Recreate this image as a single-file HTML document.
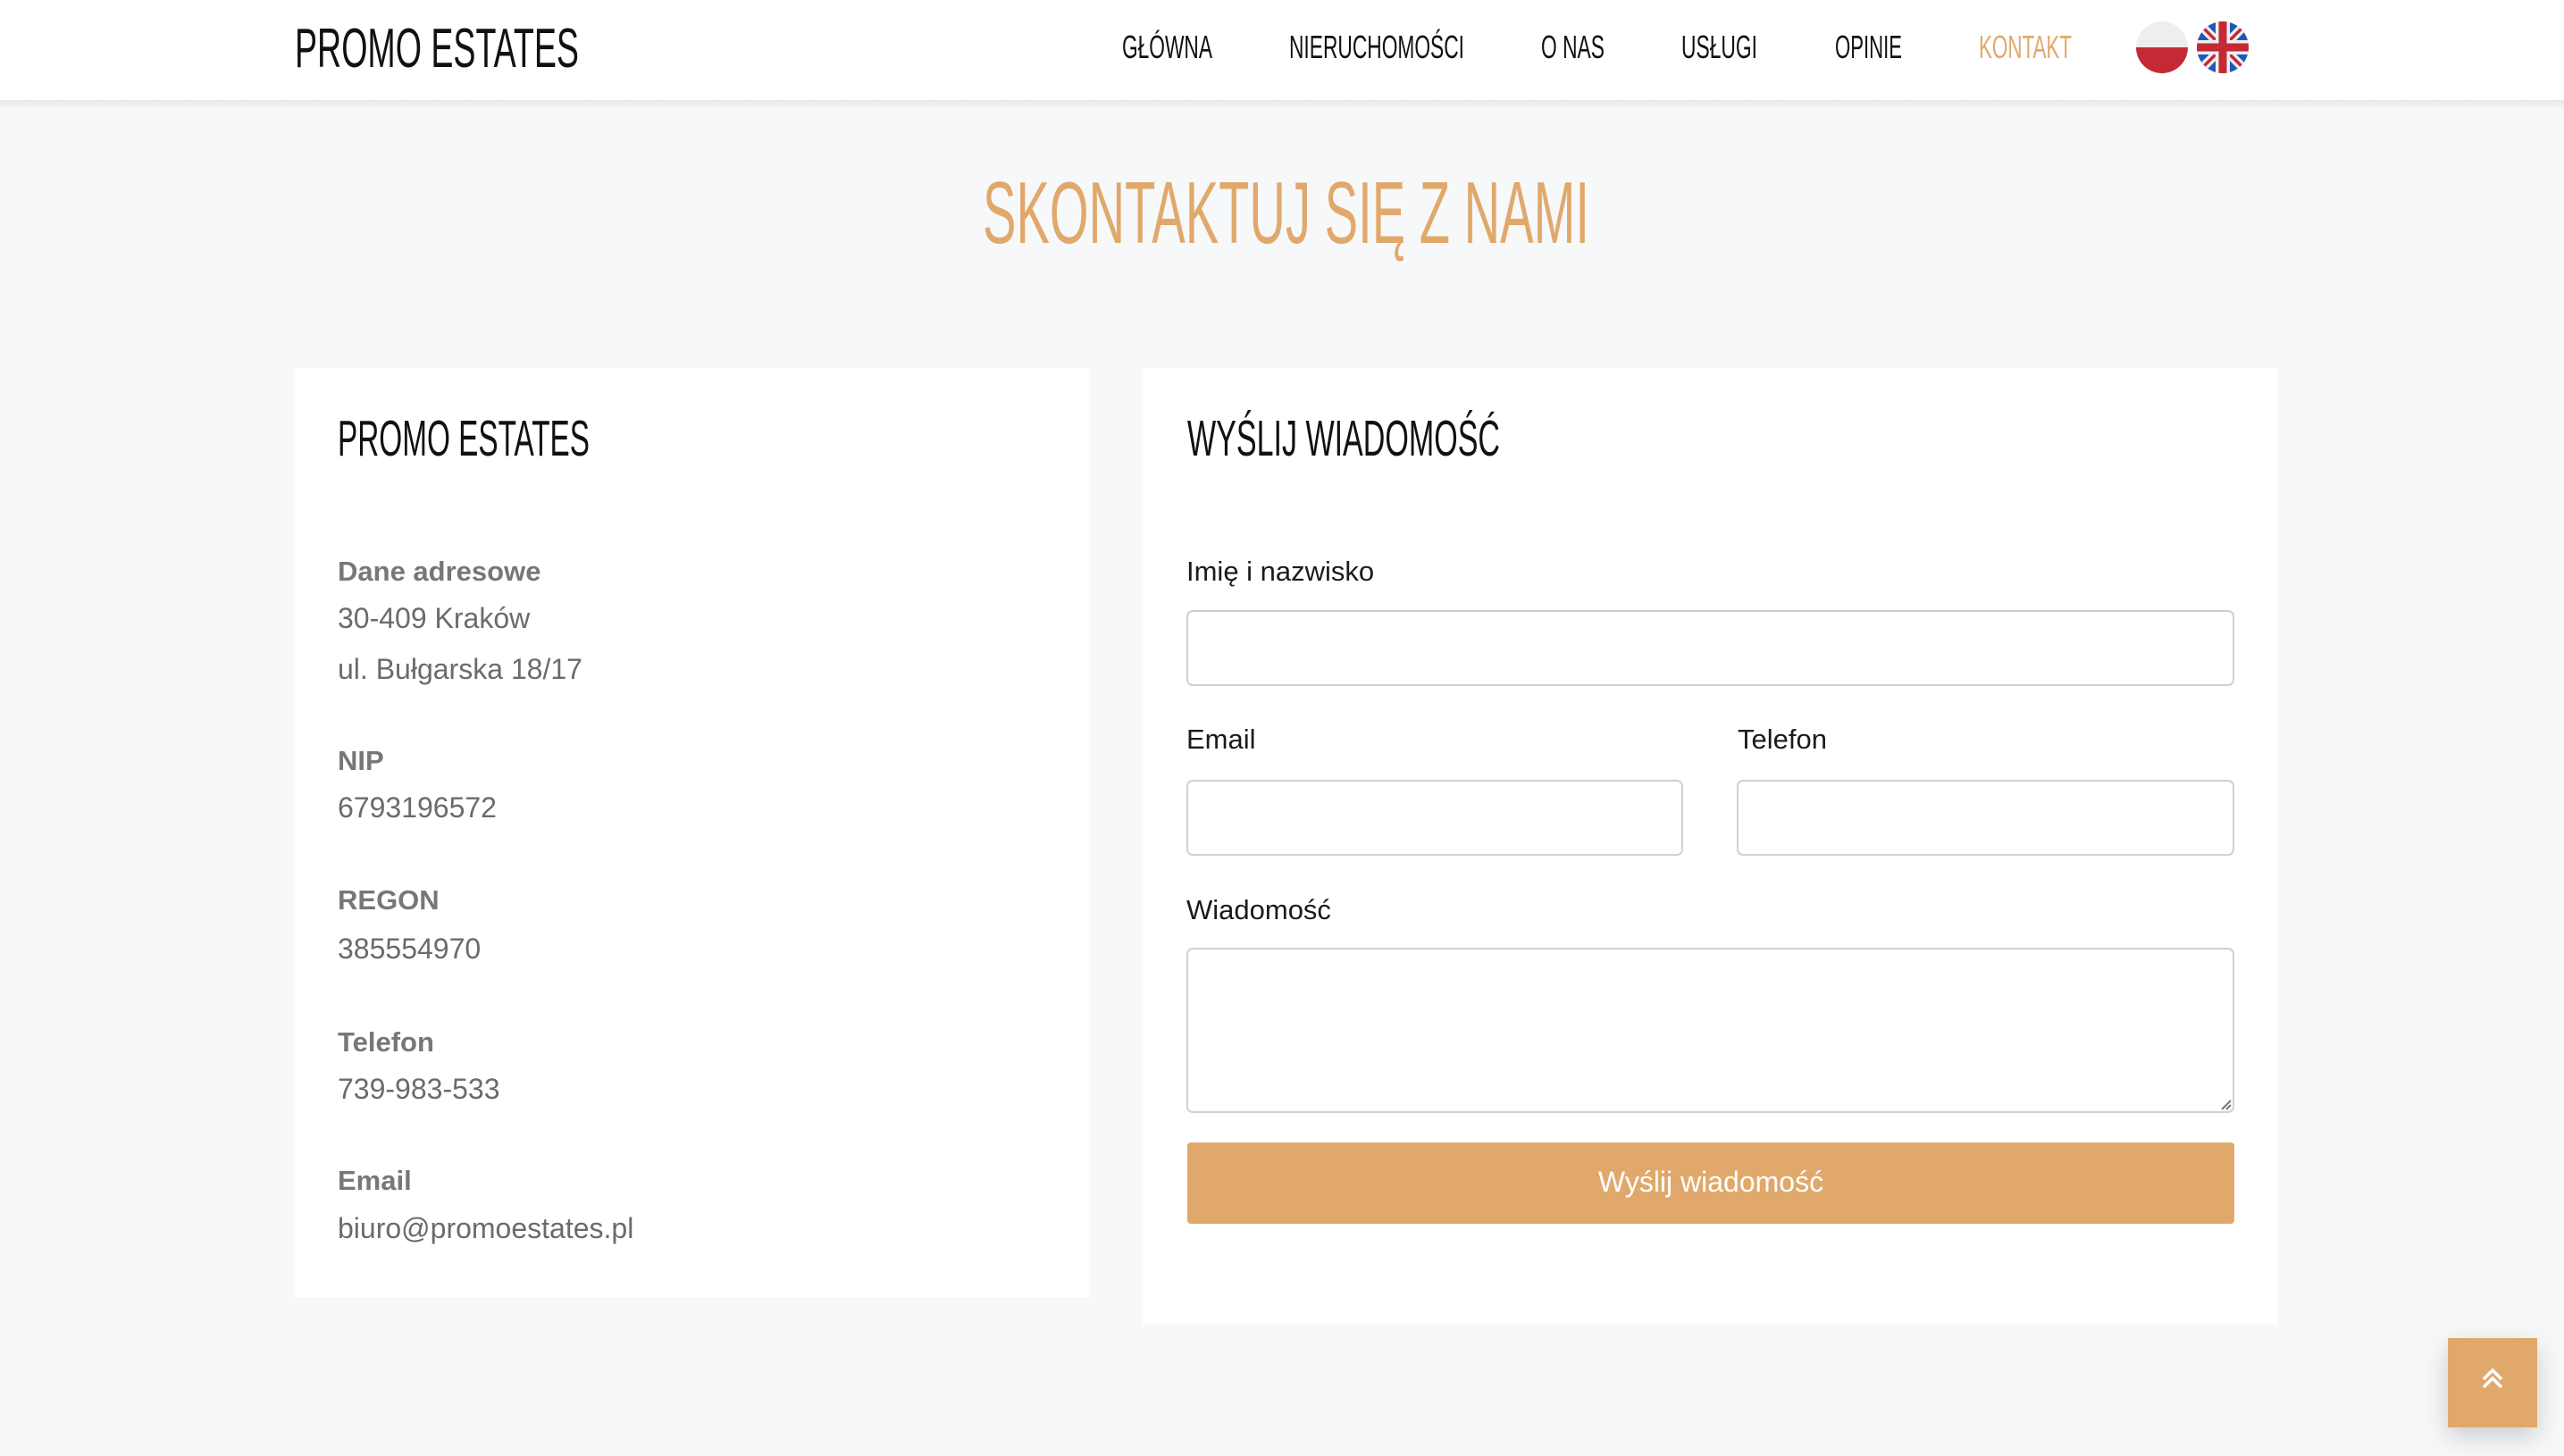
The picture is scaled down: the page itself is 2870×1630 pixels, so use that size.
<!DOCTYPE html>
<html><head><meta charset="utf-8"><style>
html,body{margin:0;padding:0;width:2870px;height:1630px;overflow:hidden;background:#f7f8fa}
svg{display:block}
</style></head><body>
<svg width="2870" height="1630" viewBox="0 0 2870 1630" xmlns="http://www.w3.org/2000/svg">
<defs>
<linearGradient id="hs" x1="0" y1="0" x2="0" y2="1"><stop offset="0" stop-color="#000" stop-opacity=".07"/><stop offset="1" stop-color="#000" stop-opacity="0"/></linearGradient>
<clipPath id="uk"><circle cx="2488" cy="53" r="29"/></clipPath>
<filter id="sh" x="-50%" y="-50%" width="200%" height="200%"><feDropShadow dx="0" dy="10" stdDeviation="14" flood-color="#000" flood-opacity=".18"/></filter>
</defs>
<rect width="2870" height="1630" fill="#f7f8fa"/>
<rect x="0" y="0" width="2870" height="112" fill="#fff"/>
<rect x="0" y="112" width="2870" height="10" fill="url(#hs)"/>
<g font-family="Liberation Sans, sans-serif" fill="#111">
<text x="330" y="75" font-size="62" textLength="318" lengthAdjust="spacingAndGlyphs">PROMO ESTATES</text>
<g font-size="36">
<text x="1256" y="65" textLength="101" lengthAdjust="spacingAndGlyphs">GŁÓWNA</text>
<text x="1443" y="65" textLength="196" lengthAdjust="spacingAndGlyphs">NIERUCHOMOŚCI</text>
<text x="1725" y="65" textLength="71" lengthAdjust="spacingAndGlyphs">O NAS</text>
<text x="1882" y="65" textLength="85" lengthAdjust="spacingAndGlyphs">USŁUGI</text>
<text x="2054" y="65" textLength="75" lengthAdjust="spacingAndGlyphs">OPINIE</text>
<text x="2215" y="65" fill="#e0a96b" textLength="104" lengthAdjust="spacingAndGlyphs">KONTAKT</text>
</g>
</g>
<path d="M2391 53 A29 29 0 0 1 2449 53 Z" fill="#eeeeee"/>
<path d="M2391 53 A29 29 0 0 0 2449 53 Z" fill="#c42a33"/>
<g clip-path="url(#uk)">
<rect x="2459" y="24" width="58" height="58" fill="#2158b5"/>
<path d="M2459 24 L2517 82 M2517 24 L2459 82" stroke="#eee" stroke-width="10"/>
<path d="M2459 24 L2517 82 M2517 24 L2459 82" stroke="#c42a33" stroke-width="3.5"/>
<path d="M2488 24 V82 M2459 53 H2517" stroke="#eee" stroke-width="16"/>
<path d="M2488 24 V82 M2459 53 H2517" stroke="#c42a33" stroke-width="9"/>
</g>
<text x="1100" y="272" font-family="Liberation Sans, sans-serif" font-size="98" fill="#e0a96b" textLength="679" lengthAdjust="spacingAndGlyphs">SKONTAKTUJ SIĘ Z NAMI</text>
<rect x="330" y="412" width="889" height="1040" fill="#fff"/>
<rect x="1279" y="412" width="1271" height="1071" fill="#fff"/>
<g font-family="Liberation Sans, sans-serif" fill="#111">
<text x="378" y="510" font-size="57" textLength="282" lengthAdjust="spacingAndGlyphs">PROMO ESTATES</text>
<text x="1329" y="510" font-size="57" textLength="350" lengthAdjust="spacingAndGlyphs">WYŚLIJ WIADOMOŚĆ</text>
</g>
<g font-family="Liberation Sans, sans-serif" font-size="31">
<g fill="#777" font-weight="bold">
<text x="378" y="650">Dane adresowe</text>
<text x="378" y="862">NIP</text>
<text x="378" y="1018">REGON</text>
<text x="378" y="1177">Telefon</text>
<text x="378" y="1332">Email</text>
</g>
<g fill="#6b6b6b" font-size="32">
<text x="378" y="703">30-409 Kraków</text>
<text x="378" y="760">ul. Bułgarska 18/17</text>
<text x="378" y="915">6793196572</text>
<text x="378" y="1073">385554970</text>
<text x="378" y="1230">739-983-533</text>
<text x="378" y="1386">biuro@promoestates.pl</text>
</g>
<g fill="#1a1a1a">
<text x="1328" y="650">Imię i nazwisko</text>
<text x="1328" y="838">Email</text>
<text x="1945" y="838">Telefon</text>
<text x="1328" y="1029">Wiadomość</text>
</g>
</g>
<g fill="#fff" stroke="#ccd1d6" stroke-width="2">
<rect x="1329" y="684" width="1171" height="83" rx="6"/>
<rect x="1329" y="874" width="554" height="83" rx="6"/>
<rect x="1945" y="874" width="555" height="83" rx="6"/>
<rect x="1329" y="1062" width="1171" height="183" rx="6"/>
</g>
<path d="M2497 1232 L2487 1242 M2497 1237 L2492 1242" stroke="#777" stroke-width="2"/>
<rect x="1329" y="1279" width="1172" height="91" rx="4" fill="#e0a96b"/>
<text x="1915" y="1334" text-anchor="middle" font-family="Liberation Sans, sans-serif" font-size="32" fill="#fff">Wyślij wiadomość</text>
<rect x="2740" y="1498" width="100" height="100" fill="#e0a96b" filter="url(#sh)"/>
<path d="M2780 1544 L2790 1534 L2800 1544 M2780 1553 L2790 1543 L2800 1553" fill="none" stroke="#fff" stroke-width="3.5"/>
</svg>
</body></html>
